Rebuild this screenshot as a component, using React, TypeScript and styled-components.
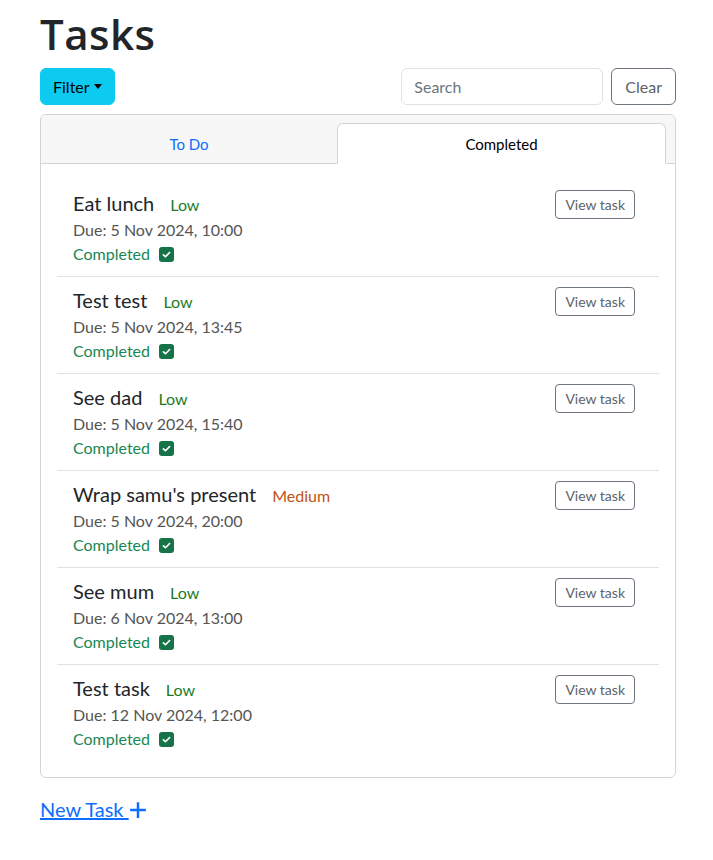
import React from "react";
import styled, { createGlobalStyle } from "styled-components";

const GlobalStyle = createGlobalStyle`
  body {
    margin: 0;
    font-family: "Lato", "Noto Sans", sans-serif;
    color: #212529;
    background: white;
  }
`;

type Priority = "Low" | "Medium";

type Task = {
  title: string;
  priority: Priority;
  due: string;
};

const tasks: Task[] = [
  { title: "Eat lunch", priority: "Low", due: "5 Nov 2024, 10:00" },
  { title: "Test test", priority: "Low", due: "5 Nov 2024, 13:45" },
  { title: "See dad", priority: "Low", due: "5 Nov 2024, 15:40" },
  { title: "Wrap samu's present", priority: "Medium", due: "5 Nov 2024, 20:00" },
  { title: "See mum", priority: "Low", due: "6 Nov 2024, 13:00" },
  { title: "Test task", priority: "Low", due: "12 Nov 2024, 12:00" },
];

const Page = styled.div`
  width: 636px;
  padding: 9px 0 0 40px;
`;

const Title = styled.h1`
  margin: 0 0 9px;
  font-family: "Open Sans", "Lato", sans-serif;
  font-size: 42px;
  font-weight: 600;
  line-height: 50px;
  letter-spacing: 0.5px;
  color: #212529;
`;

const Toolbar = styled.div`
  display: flex;
  align-items: center;
  margin-bottom: 9px;
`;

const FilterButton = styled.button`
  height: 37px;
  padding: 0 12px;
  background: #0dcaf0;
  border: 1px solid #0dcaf0;
  border-radius: 6px;
  font-family: inherit;
  font-size: 16px;
  color: #000;
  display: flex;
  align-items: center;
  &::after {
    content: "";
    margin-left: 4px;
    border-top: 5px solid #000;
    border-left: 4px solid transparent;
    border-right: 4px solid transparent;
  }
`;

const SearchInput = styled.input`
  margin-left: auto;
  width: 202px;
  height: 37px;
  box-sizing: border-box;
  padding: 0 12px;
  border: 1px solid #dee2e6;
  border-radius: 6px;
  font-family: inherit;
  font-size: 16px;
  outline: none;
  &::placeholder {
    color: #6c757d;
  }
`;

const OutlineButton = styled.button<{ $small?: boolean }>`
  height: ${(p) => (p.$small ? "29px" : "37px")};
  padding: ${(p) => (p.$small ? "0 9px" : "0 13px")};
  margin-left: ${(p) => (p.$small ? "0" : "8px")};
  background: white;
  border: 1px solid #6c757d;
  border-radius: ${(p) => (p.$small ? "4px" : "6px")};
  font-family: inherit;
  font-size: ${(p) => (p.$small ? "14px" : "16px")};
  color: #5c636a;
  white-space: nowrap;
`;

const Card = styled.div`
  border: 1px solid #d4d4d4;
  border-radius: 6px;
  overflow: hidden;
`;

const CardHeader = styled.div`
  background: #f7f7f7;
  border-bottom: 1px solid #d4d4d4;
  padding: 8px 9px 0 0;
  display: flex;
  align-items: flex-end;
  height: 49px;
  box-sizing: border-box;
`;

const Tab = styled.div<{ $active?: boolean }>`
  flex: 1 1 auto;
  padding: 0 16px;
  height: 41px;
  box-sizing: border-box;
  display: flex;
  align-items: center;
  justify-content: center;
  font-size: 15px;
  margin-bottom: -1px;
  color: ${(p) => (p.$active ? "#000" : "#0d6efd")};
  background: ${(p) => (p.$active ? "white" : "transparent")};
  border: 1px solid ${(p) => (p.$active ? "#d4d4d4" : "transparent")};
  border-bottom-color: ${(p) => (p.$active ? "white" : "transparent")};
  border-radius: 6px 6px 0 0;
`;

const CardBody = styled.div`
  padding: 16px;
`;

const Item = styled.div`
  display: flex;
  justify-content: space-between;
  align-items: flex-start;
  padding: 8px 24px 10px 16px;
  & + & {
    border-top: 1px solid #dee2e6;
  }
`;

const ItemText = styled.div`
  display: flex;
  flex-direction: column;
`;

const TitleRow = styled.div`
  display: flex;
  align-items: center;
  gap: 16px;
  height: 30px;
`;

const TaskName = styled.span`
  font-size: 20px;
  color: #212529;
`;

const PriorityTag = styled.span<{ $level: Priority }>`
  font-size: 16px;
  padding-top: 2px;
  color: ${(p) => (p.$level === "Medium" ? "#bd5412" : "#1e7b1e")};
`;

const Due = styled.div`
  font-size: 16px;
  line-height: 24px;
  color: #555;
`;

const Status = styled.div`
  display: flex;
  align-items: center;
  gap: 9px;
  font-size: 16px;
  line-height: 24px;
  color: #198754;
`;

const CheckBox = styled.span`
  width: 15px;
  height: 15px;
  border-radius: 3px;
  background: #157347;
  display: inline-flex;
  align-items: center;
  justify-content: center;
`;

const ViewWrap = styled.div`
  padding-top: 2px;
`;

const NewTask = styled.a`
  display: inline-block;
  margin-top: 16px;
  font-size: 20px;
  line-height: 30px;
  color: #0d6efd;
  text-decoration: underline;
  cursor: pointer;
  svg {
    vertical-align: -2px;
  }
`;

const Check = () => (
  <svg width="9" height="9" viewBox="0 0 16 16">
    <path
      d="M2.5 8.5 L6.2 12 L13.5 4.5"
      fill="none"
      stroke="white"
      strokeWidth="3"
      strokeLinecap="round"
      strokeLinejoin="round"
    />
  </svg>
);

const Plus = () => (
  <svg width="18" height="18" viewBox="0 0 16 16">
    <path d="M8 1v14M1 8h14" stroke="#0d6efd" strokeWidth="2.2" />
  </svg>
);

export default function App() {
  return (
    <>
      <GlobalStyle />
      <Page>
        <Title>Tasks</Title>
        <Toolbar>
          <FilterButton>Filter</FilterButton>
          <SearchInput placeholder="Search" />
          <OutlineButton>Clear</OutlineButton>
        </Toolbar>
        <Card>
          <CardHeader>
            <Tab>To Do</Tab>
            <Tab $active>Completed</Tab>
          </CardHeader>
          <CardBody>
            {tasks.map((t) => (
              <Item key={t.title}>
                <ItemText>
                  <TitleRow>
                    <TaskName>{t.title}</TaskName>
                    <PriorityTag $level={t.priority}>{t.priority}</PriorityTag>
                  </TitleRow>
                  <Due>Due: {t.due}</Due>
                  <Status>
                    Completed
                    <CheckBox>
                      <Check />
                    </CheckBox>
                  </Status>
                </ItemText>
                <ViewWrap>
                  <OutlineButton $small>View task</OutlineButton>
                </ViewWrap>
              </Item>
            ))}
          </CardBody>
        </Card>
        <NewTask>
          New Task <Plus />
        </NewTask>
      </Page>
    </>
  );
}
